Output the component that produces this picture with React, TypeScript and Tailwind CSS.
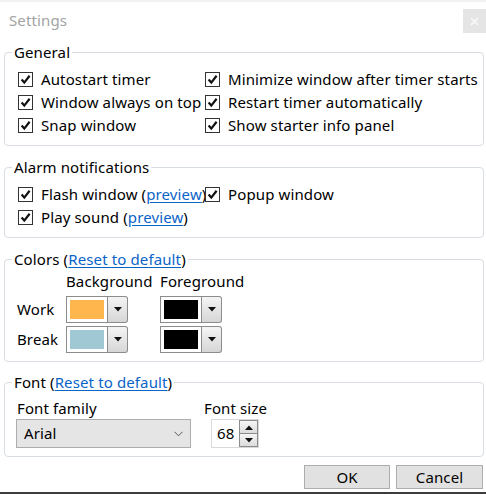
import React from "react"

const font = "font-['Noto_Sans',sans-serif]"

const CheckBox: React.FC = () => (
  <span className="flex h-[15px] w-[15px] shrink-0 items-center justify-center border border-[#333] bg-white">
    <svg width="11" height="11" viewBox="0 0 11 11">
      <path d="M1.6 5.6 L4.3 8.6 L9.6 1.8" fill="none" stroke="#111" strokeWidth="2.2" />
    </svg>
  </span>
)

const Option: React.FC<{ children: React.ReactNode }> = ({ children }) => (
  <label className="flex h-[23px] items-center gap-[8px] overflow-hidden whitespace-nowrap">
    <CheckBox />
    <span>{children}</span>
  </label>
)

const Link: React.FC<{ children: React.ReactNode }> = ({ children }) => (
  <a className="text-[#0a64c8] underline underline-offset-[1.5px]">{children}</a>
)

const Group: React.FC<{ legend: React.ReactNode; className?: string; children: React.ReactNode }> = ({
  legend,
  className,
  children,
}) => (
  <fieldset className={"ml-[4px] mr-[2px] rounded-[4px] border border-[#d7dde3] " + (className ?? "")}>
    <legend className="ml-[7px] px-[2px] leading-[20px]">{legend}</legend>
    {children}
  </fieldset>
)

const Arrow: React.FC<{ up?: boolean }> = ({ up }) => (
  <svg width="8" height="5" viewBox="0 0 8 5">
    <path d={up ? "M0 5 L4 0.5 L8 5 Z" : "M0 0 L8 0 L4 4.5 Z"} fill="#111" />
  </svg>
)

const ColorPicker: React.FC<{ color: string }> = ({ color }) => (
  <div className="flex h-[27px] w-[62px]">
    <div className="flex-1 border border-[#8c8c8c] bg-white p-[3px]">
      <div className="h-full w-full" style={{ backgroundColor: color }} />
    </div>
    <div className="flex w-[20px] items-center justify-center rounded-r-[3px] border border-l-0 border-[#8c8c8c] bg-gradient-to-b from-[#f5f5f5] to-[#d6d6d6]">
      <Arrow />
    </div>
  </div>
)

const App: React.FC = () => {
  return (
    <div
      className={`${font} h-[494px] w-[486px] overflow-hidden border-b-2 border-[#3c3c3c] bg-white text-[15px] tracking-[0.12px] text-black`}
    >
      <header className="flex h-[42px] items-start justify-between border-t-2 border-[#f1f1f1]">
        <h1 className="ml-[9px] mt-[8px] leading-[20px] text-[#a3a3a3]">Settings</h1>
        <button className="mt-[7px] flex h-[24px] w-[23px] items-center justify-center bg-[#e5e5e5]">
          <svg width="9" height="9" viewBox="0 0 9 9">
            <path d="M1 1 L8 8 M8 1 L1 8" stroke="#fafafa" strokeWidth="1.6" />
          </svg>
        </button>
      </header>

      <Group legend="General">
        <div className="grid grid-cols-[187px_1fr] pb-[8px] pl-[13px] pt-[6px]">
          <Option>Autostart timer</Option>
          <Option>Minimize window after timer starts</Option>
          <Option>Window always on top</Option>
          <Option>Restart timer automatically</Option>
          <Option>Snap window</Option>
          <Option>Show starter info panel</Option>
        </div>
      </Group>

      <Group legend="Alarm notifications" className="mt-[11px]">
        <div className="grid grid-cols-[187px_1fr] pb-[8px] pl-[13px] pt-[6px]">
          <Option>
            Flash window (<Link>preview</Link>)
          </Option>
          <Option>Popup window</Option>
          <Option>
            Play sound (<Link>preview</Link>)
          </Option>
        </div>
      </Group>

      <Group
        legend={
          <>
            Colors (<Link>Reset to default</Link>)
          </>
        }
        className="mt-[11px]"
      >
        <div className="grid grid-cols-[49px_94px_1fr] items-center gap-y-[3px] pb-[8px] pl-[12px]">
          <span />
          <span className="h-[24px] leading-[24px]">Background</span>
          <span className="h-[24px] leading-[24px]">Foreground</span>
          <span>Work</span>
          <ColorPicker color="#ffb74d" />
          <ColorPicker color="#000000" />
          <span>Break</span>
          <ColorPicker color="#9fc8d4" />
          <ColorPicker color="#000000" />
        </div>
      </Group>

      <Group
        legend={
          <>
            Font (<Link>Reset to default</Link>)
          </>
        }
        className="mt-[10px]"
      >
        <div className="flex gap-[13px] pb-[8px] pl-[11px] pt-[5px]">
          <div className="flex flex-col">
            <span className="h-[22px] pl-[1px] leading-[22px]">Font family</span>
            <div className="flex h-[29px] w-[175px] items-center justify-between border border-[#adadad] bg-[#e5e5e5] pl-[7px] pr-[7px]">
              <span>Arial</span>
              <svg width="9" height="6" viewBox="0 0 9 6">
                <path d="M0.5 0.8 L4.5 4.8 L8.5 0.8" fill="none" stroke="#555" strokeWidth="1" />
              </svg>
            </div>
          </div>
          <div className="flex flex-col">
            <span className="h-[22px] leading-[22px]">Font size</span>
            <div className="ml-[7px] flex h-[29px] w-[48px] border border-[#d9d9d9] bg-white">
              <span className="flex-1 pl-[5px] leading-[27px]">68</span>
              <div className="flex w-[19px] flex-col">
                <div className="flex flex-1 items-center justify-center border border-[#8c8c8c] bg-gradient-to-b from-[#f5f5f5] to-[#dcdcdc]">
                  <Arrow up />
                </div>
                <div className="flex flex-1 items-center justify-center border border-t-0 border-[#8c8c8c] bg-gradient-to-b from-[#f5f5f5] to-[#dcdcdc]">
                  <Arrow />
                </div>
              </div>
            </div>
          </div>
        </div>
      </Group>

      <div className="mt-[8px] flex justify-end gap-[6px] pr-[3px]">
        <button className="h-[24px] w-[86px] border border-[#adadad] bg-[#e1e1e1] leading-[22px]">OK</button>
        <button className="h-[24px] w-[87px] border border-[#adadad] bg-[#e1e1e1] leading-[22px]">Cancel</button>
      </div>
    </div>
  )
}

export default App
